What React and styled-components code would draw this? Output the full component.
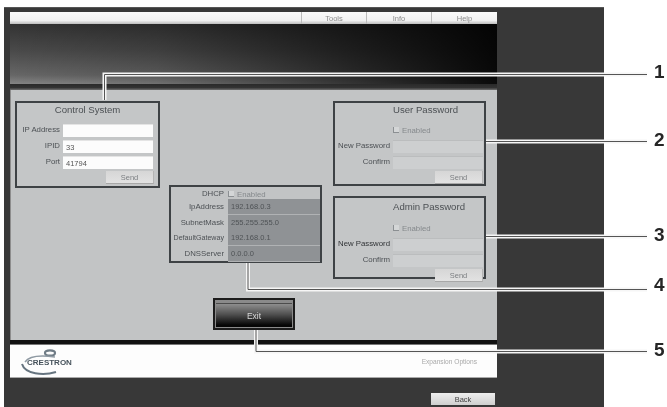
import React from "react";
import styled, { createGlobalStyle } from "styled-components";

const Global = createGlobalStyle`
  html, body { margin: 0; padding: 0; background: #fff; }
  body { width: 667px; height: 407px; overflow: hidden; font-family: "Liberation Sans", Arial, sans-serif; }
`;

const Figure = styled.div`
  position: relative;
  width: 667px;
  height: 407px;
  padding: 7px 0 0 4px;
  box-sizing: border-box;
  background: #fff;
  overflow: hidden;
  filter: blur(0.6px);
`;

const Frame = styled.div`
  width: 600px;
  height: 400px;
  box-sizing: border-box;
  padding: 4px 0 0 6px;
  background: #383838;
  border-top: 1px solid #555;
`;

const Page = styled.div`
  width: 487px;
  display: flex;
  flex-direction: column;
`;

const TopNav = styled.nav`
  height: 12px;
  display: flex;
  justify-content: flex-end;
  background: linear-gradient(#fafafa, #f2f2f2 70%, #bdbdbd);
`;

const NavItem = styled.a`
  width: ${p => p.$w}px;
  box-sizing: border-box;
  border-left: 1px solid #bcbcbc;
  font-size: 7.5px;
  line-height: 13px;
  text-align: center;
  color: #8c8c8c;
`;

const Banner = styled.div`
  height: 60px;
  background:
    linear-gradient(90deg, rgba(0,0,0,0) 0%, rgba(0,0,0,0.15) 30%, rgba(0,0,0,0.55) 65%, rgba(0,0,0,0.92) 100%),
    linear-gradient(#333 0%, #4a4a4a 45%, #666 85%, #858585 100%);
`;

const Strip = styled.div`
  height: 6px;
  background: linear-gradient(#2a2a2a, #333 60%, #707070);
`;

const Panel = styled.main`
  height: 250px;
  box-sizing: border-box;
  padding: 11px 0 0 4px;
  display: grid;
  grid-template-columns: 145px 153px 155px;
  column-gap: 9px;
  background: #c2c4c5;
  border-left: 1px solid #8d8d8d;
`;

const LeftCol = styled.div``;

const MiddleCol = styled.div`
  padding-top: 84px;
  display: flex;
  flex-direction: column;
`;

const RightCol = styled.div`
  padding-left: 2px;
  display: flex;
  flex-direction: column;
  gap: 10px;
`;

const Box = styled.section`
  box-sizing: border-box;
  height: ${p => p.$h}px;
  border: 2px solid #3e4245;
  padding: ${p => p.$top || 1}px 1px 0 1px;
  background: #c4c6c7;
`;

const BoxTitle = styled.h3`
  margin: 0 0 ${p => p.$gap || 7}px;
  font-size: 9.6px;
  line-height: 12px;
  font-weight: normal;
  color: #4c5054;
  text-align: ${p => p.$left ? "left" : "center"};
  padding-left: ${p => p.$pad || 0}px;
`;

const Row = styled.div`
  display: flex;
  align-items: center;
  gap: 3px;
  height: 14px;
  margin-bottom: 2px;
`;

const Label = styled.label`
  width: ${p => p.$w}px;
  flex: none;
  align-self: center;
  font-size: ${p => p.$fs || 7.8}px;
  line-height: 14px;
  text-align: right;
  color: ${p => p.$c || "#4c5054"};
  white-space: nowrap;
`;

const Field = styled.div`
  width: ${p => p.$w}px;
  height: 13px;
  box-sizing: border-box;
  padding-left: 3px;
  font-size: 7.5px;
  line-height: 13px;
  color: #555;
  background: ${p => p.$muted ? "#cdcfd0" : "#fcfcfc"};
  border-top: 1px solid ${p => p.$muted ? "#bbbdbe" : "#e4e4e4"};
`;

const Check = styled.span`
  width: 5px;
  height: 5px;
  flex: none;
  border-left: 1px solid #8b8f92;
  border-bottom: 1px solid #8b8f92;
  background: #d4d6d7;
`;

const Enabled = styled.span`
  font-size: 7.8px;
  color: #85898c;
`;

const ActionRow = styled.div`
  display: flex;
  justify-content: flex-end;
  padding-right: ${p => p.$pr ?? 3}px;
`;

const SendButton = styled.button`
  width: 48px;
  height: 13px;
  padding: 0;
  border: none;
  border-bottom: 1px solid #a8a8a8;
  border-right: 1px solid #b4b4b4;
  background: linear-gradient(#d6d6d6, #e2e2e2);
  font-family: inherit;
  font-size: 7.5px;
  color: #7c7f82;
`;

const NetBox = styled.section`
  box-sizing: border-box;
  height: 78px;
  border: 2px solid #3e4245;
  background: #c2c4c5;
`;

const NetRow = styled.div`
  display: grid;
  grid-template-columns: 53px 1fr;
  column-gap: 4px;
  height: ${p => p.$h || 15.5}px;
  align-items: stretch;
`;

const NetValue = styled.div`
  font-size: 7.5px;
  line-height: 15px;
  padding-left: 3px;
  color: #4f5356;
  background: #8f9295;
  border-bottom: 1px solid #b0b2b4;
`;

const DhcpValue = styled.div`
  display: flex;
  align-items: center;
  gap: 3px;
`;

const ExitFrame = styled.div`
  width: 82px;
  height: 32px;
  box-sizing: border-box;
  margin: 35px 0 0 44px;
  padding: 3px 1px 1px;
  border: 2px solid #1c1c1c;
  background: #8a8a8a;
`;

const ExitButton = styled.button`
  display: block;
  width: 100%;
  height: 100%;
  padding: 0;
  border: none;
  border-top: 1px solid #4c4c4c;
  background: linear-gradient(#8e8e8e, #505050 45%, #050505 92%);
  font-family: inherit;
  font-size: 8.5px;
  color: #d8d8d8;
`;

const Rule = styled.div`
  height: 4px;
  background: #111;
  border-bottom: 1px solid #777;
`;

const Footer = styled.footer`
  height: 33px;
  box-sizing: border-box;
  padding: 0 20px 0 11px;
  display: flex;
  align-items: center;
  justify-content: space-between;
  background: #fdfdfd;
  border-bottom: 1px solid #aaa;
`;

const Crestron = styled.span`
  font-size: 6.6px;
  color: #a9a9a9;
`;

const BackRow = styled.div`
  display: flex;
  justify-content: flex-end;
  padding: 15px 2px 0 0;
`;

const BackButton = styled.button`
  width: 64px;
  height: 12px;
  padding: 0;
  border: none;
  background: linear-gradient(#eee, #cfcfcf);
  font-family: inherit;
  font-size: 7.5px;
  color: #444;
`;

const Leaders = styled.svg`
  position: absolute;
  left: 0;
  top: 0;
  width: 667px;
  height: 407px;
  pointer-events: none;
`;

const Num = styled.span`
  position: absolute;
  left: 654px;
  top: ${p => p.$y}px;
  font-size: 19px;
  line-height: 18px;
  font-weight: bold;
  color: #262626;
`;

const Logo = () => (
  <svg width="56" height="30" viewBox="0 0 56 30">
    <ellipse cx="29" cy="7" rx="5" ry="2.6" fill="none" stroke="#6f7c86" strokeWidth="2.2" />
    <path d="M4 16 C8 10 20 9 34 11" fill="none" stroke="#8f9aa3" strokeWidth="1.4" />
    <path d="M1 18 C4 28 22 30 35 26" fill="none" stroke="#66747f" strokeWidth="2" />
    <text x="6" y="19" fontFamily="Liberation Sans" fontSize="8" fontWeight="bold" fill="#46525b">CRESTRON</text>
  </svg>
);

const lines = [
  "M104.5 100 V74.5 H647",
  "M486 141.5 H647",
  "M486 236.5 H647",
  "M248 263 V289.5 H647",
  "M256 330 V351.5 H647",
];

const Trace = ({ d }) => (
  <>
    <path d={d} fill="none" stroke="#f6f6f6" strokeWidth="4" />
    <path d={d} fill="none" stroke="#555" strokeWidth="1" />
  </>
);

export default function App() {
  return (
    <>
      <Global />
      <Figure>
        <Frame>
          <Page>
            <TopNav>
              <NavItem $w={65}>Tools</NavItem>
              <NavItem $w={65}>Info</NavItem>
              <NavItem $w={66}>Help</NavItem>
            </TopNav>
            <Banner />
            <Strip />
            <Panel>
              <LeftCol>
                <Box $h={87}>
                  <BoxTitle>Control System</BoxTitle>
                  <Row><Label $w={42}>IP Address</Label><Field $w={90} /></Row>
                  <Row><Label $w={42}>IPID</Label><Field $w={90}>33</Field></Row>
                  <Row><Label $w={42}>Port</Label><Field $w={90}>41794</Field></Row>
                  <ActionRow><SendButton>Send</SendButton></ActionRow>
                </Box>
              </LeftCol>
              <MiddleCol>
                <NetBox>
                  <NetRow $h={12}>
                    <Label $w={53}>DHCP</Label>
                    <DhcpValue><Check /><Enabled>Enabled</Enabled></DhcpValue>
                  </NetRow>
                  <NetRow><Label $w={53}>IpAddress</Label><NetValue>192.168.0.3</NetValue></NetRow>
                  <NetRow><Label $w={53}>SubnetMask</Label><NetValue>255.255.255.0</NetValue></NetRow>
                  <NetRow><Label $w={53} $fs={7.1}>DefaultGateway</Label><NetValue>192.168.0.1</NetValue></NetRow>
                  <NetRow><Label $w={53}>DNSServer</Label><NetValue>0.0.0.0</NetValue></NetRow>
                </NetBox>
                <ExitFrame><ExitButton>Exit</ExitButton></ExitFrame>
              </MiddleCol>
              <RightCol>
                <Box $h={85}>
                  <BoxTitle $left $pad={57}>User Password</BoxTitle>
                  <Row><Label $w={54} /><Check /><Enabled>Enabled</Enabled></Row>
                  <Row><Label $w={54}>New Password</Label><Field $w={90} $muted /></Row>
                  <Row><Label $w={54}>Confirm</Label><Field $w={90} $muted /></Row>
                  <ActionRow $pr={0}><SendButton>Send</SendButton></ActionRow>
                </Box>
                <Box $h={83} $top={3}>
                  <BoxTitle $left $pad={57} $gap={8}>Admin Password</BoxTitle>
                  <Row><Label $w={54} /><Check /><Enabled>Enabled</Enabled></Row>
                  <Row><Label $w={54} $c="#303336">New Password</Label><Field $w={90} $muted /></Row>
                  <Row><Label $w={54}>Confirm</Label><Field $w={90} $muted /></Row>
                  <ActionRow $pr={0}><SendButton>Send</SendButton></ActionRow>
                </Box>
              </RightCol>
            </Panel>
            <Rule />
            <Footer>
              <Logo />
              <Crestron>Expansion Options</Crestron>
            </Footer>
            <BackRow><BackButton>Back</BackButton></BackRow>
          </Page>
        </Frame>
        <Leaders viewBox="0 0 667 407">
          {lines.map(d => <Trace key={d} d={d} />)}
        </Leaders>
        <Num $y={63}>1</Num>
        <Num $y={131}>2</Num>
        <Num $y={226}>3</Num>
        <Num $y={276}>4</Num>
        <Num $y={341}>5</Num>
      </Figure>
    </>
  );
}
